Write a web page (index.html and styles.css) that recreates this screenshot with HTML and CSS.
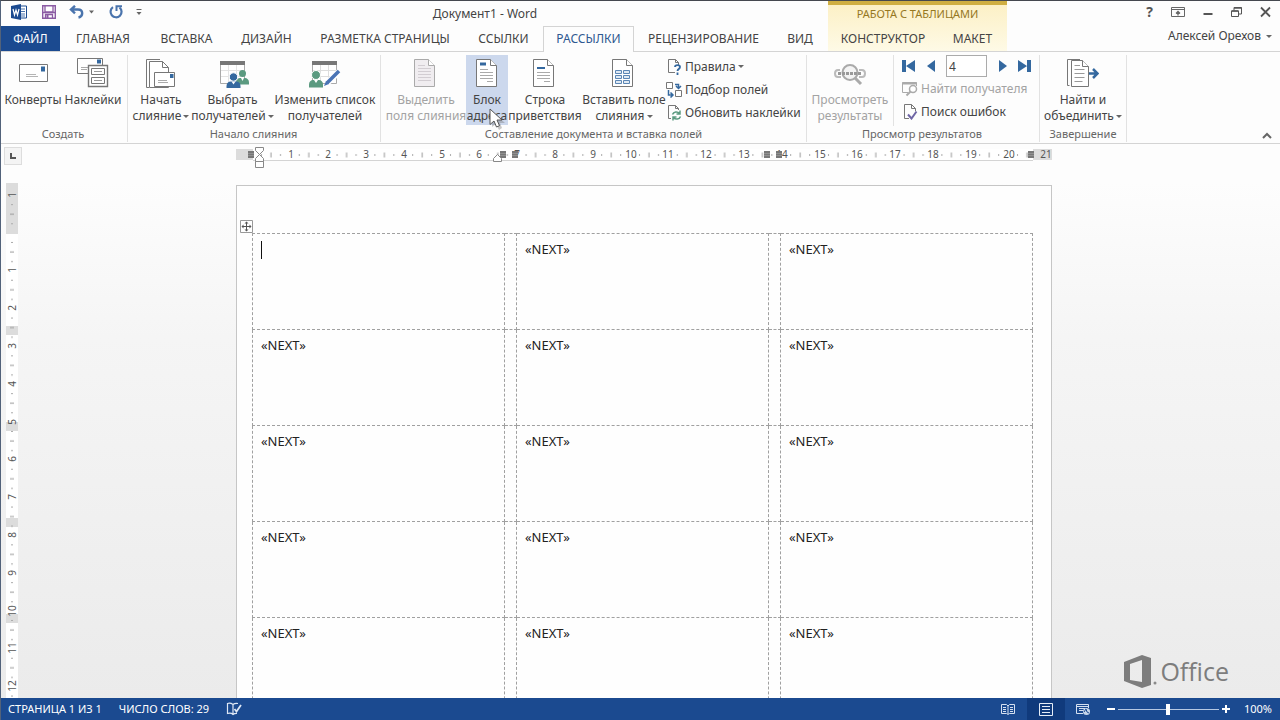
FILE: index.html
```html
<!DOCTYPE html>
<html lang="ru">
<head>
<meta charset="utf-8">
<title>Документ1 - Word</title>
<link rel="stylesheet" href="styles.css">
</head>
<body>
<div class="window">
  <header class="header">
    <div class="header-main">
      <div class="titlebar">
        <div class="quick">
          <svg class="word-logo" width="18" height="16" viewBox="0 0 18 16"><path d="M9 2h6.500v12H9z" fill="#fff" stroke="#1b4a90"/><path d="M10 5h4M10 7.500h4M10 10h4M10 12h4" stroke="#4c74ad"/><path d="M0 2 10 0v16L0 14z" fill="#1b4a90"/><path d="m2 5 1.500 6L5 6l1.500 5L8 5" fill="none" stroke="#fff" stroke-width="1.200"/></svg>
          <button class="plain" aria-label="Сохранить"><svg width="14" height="14" viewBox="0 0 14 14"><path d="M.7.7h12.600v12.600H.7z" fill="#fff" stroke="#8b5ba3" stroke-width="1.400"/><path d="M1 7.500h12M3 1v6h8V1M3.500 13V9.500h7V13" fill="none" stroke="#8b5ba3" stroke-width="1.300"/><path d="M4.500 10h2v3h-2z" fill="#8b5ba3"/></svg></button>
          <button class="plain undo" aria-label="Отменить"><svg width="27" height="14" viewBox="0 0 27 14"><path d="M2 4.500h7c5.500 0 5.500 7 .5 8M6 .8 2 4.500l4 3.800" fill="none" stroke="#4a74ad" stroke-width="2.400"/><path d="M20 5.500h5l-2.500 3z" fill="#666"/></svg></button>
          <button class="plain" aria-label="Повторить"><svg width="14" height="14" viewBox="0 0 14 14"><path d="M4 2.200A5.500 5.500 0 1 0 10.500 2.500" fill="none" stroke="#4a74ad" stroke-width="2.200"/><path d="M7.500 6V1.200H13" fill="none" stroke="#4a74ad" stroke-width="2"/></svg></button>
          <button class="plain" aria-label="Настройка панели быстрого доступа"><svg width="6" height="8" viewBox="0 0 6 8"><path d="M.5 1.500h5" stroke="#666"/><path d="M.5 4h5L3 7z" fill="#666"/></svg></button>
        </div>
        <h1 class="title">Документ1 - Word</h1>
      </div>
      <nav class="tabs">
        <button class="tab file">ФАЙЛ</button>
        <button class="tab">ГЛАВНАЯ</button>
        <button class="tab">ВСТАВКА</button>
        <button class="tab">ДИЗАЙН</button>
        <button class="tab">РАЗМЕТКА СТРАНИЦЫ</button>
        <button class="tab">ССЫЛКИ</button>
        <button class="tab active">РАССЫЛКИ</button>
        <button class="tab">РЕЦЕНЗИРОВАНИЕ</button>
        <button class="tab">ВИД</button>
      </nav>
    </div>
    <div class="context">
      <div class="context-title">РАБОТА С ТАБЛИЦАМИ</div>
      <div class="context-tabs">
        <button class="tab">КОНСТРУКТОР</button>
        <button class="tab">МАКЕТ</button>
      </div>
    </div>
    <div class="header-end">
      <div class="window-buttons">
        <button class="plain help" aria-label="Справка">?</button>
        <button class="plain" aria-label="Параметры отображения ленты"><svg width="14" height="12" viewBox="0 0 14 12"><path d="M.5 1.500h13v9H.5zM.5 3.500h13" fill="none" stroke="#666"/><path d="M7 9.500V5.500M5 7.500l2-2 2 2" fill="none" stroke="#666" stroke-width="1.300"/></svg></button>
        <button class="plain" aria-label="Свернуть"><svg width="10" height="12" viewBox="0 0 10 12"><path d="M.5 8h9" stroke="#555" stroke-width="2"/></svg></button>
        <button class="plain" aria-label="Восстановить"><svg width="11" height="12" viewBox="0 0 11 12"><path d="M.5 5h7v5.500h-7zM3 4.500V1.500h7.500V8H8" fill="none" stroke="#555"/><path d="M.5 5h7M3 2h7.500" stroke="#555" stroke-width="1.600"/></svg></button>
        <button class="plain" aria-label="Закрыть"><svg width="11" height="12" viewBox="0 0 11 12"><path d="m1 1.500 9 9m0-9-9 9" stroke="#555" stroke-width="1.800"/></svg></button>
      </div>
      <button class="plain account">Алексей Орехов <i class="arrow"></i></button>
    </div>
  </header>

  <div class="ribbon">
    <section class="group">
      <div class="tools">
        <button class="tool w60"><svg width="32" height="36" viewBox="0 0 32 36"><path d="M2.500 8.500h28v17h-28z" fill="#fff" stroke="#777"/><path d="M24 10.500h4v5h-4z" fill="#34689f"/><path d="M9 18.500h10M9 20.500h12" stroke="#b5b5b5"/></svg><span>Конверты</span></button>
        <button class="tool w60"><svg width="32" height="36" viewBox="0 0 32 36"><path d="M.5 2.500h25v15H.5z" fill="#fff" stroke="#777"/><path d="M20 3.500h4v4h-4z" fill="#34689f"/><path d="M4 11.500h7M4 13.500h6" stroke="#aaa"/><path d="M11.500 9.500h19v21h-19z" fill="#fff" stroke="#777" stroke-width="1.400"/><path d="M14.500 12.500h13v6h-13zM14.500 21.500h13v6h-13z" fill="#fff" stroke="#777"/><path d="M17 15.500h8M17 24.500h8" stroke="#999"/></svg><span>Наклейки</span></button>
      </div>
      <h2>Создать</h2>
    </section>
    <section class="group">
      <div class="tools">
        <button class="tool w60"><svg width="32" height="36" viewBox="0 0 32 36"><path d="M4 31.500H1.500v-28H15" fill="none" stroke="#777"/><path d="M4.500 5.500h13l6 6v20h-19z" fill="#fff" stroke="#777"/><path d="M17.500 5.500v6h6" fill="none" stroke="#777"/><path d="M9.500 16.500h20v14h-20z" fill="#fff" stroke="#777"/><path d="M25 18h3.500v4H25z" fill="#34689f"/><path d="M13 24.500h9M13 26.500h10" stroke="#aaa"/></svg><span>Начать<br>слияние <i class="arrow"></i></span></button>
        <button class="tool w83"><svg width="32" height="36" viewBox="0 0 32 36"><path d="M3.500 5.500h24v22h-24z" fill="#fff" stroke="#aaa"/><path d="M3 5h25v4H3z" fill="#777"/><path d="M4 14.500h23M4 20.500h23M11.500 9v18M19.500 9v18" stroke="#e4e4e4"/><circle cx="25.500" cy="17.500" r="3.500" fill="#5b9a80"/><path d="M19 28.500v-2c0-3 2-4.500 4-4.500h5c2 0 4 1.500 4 4.500v2z" fill="#5b9a80"/><path d="m24 22 1.500 3 1.500-3z" fill="#fff"/><circle cx="16.500" cy="21" r="4.200" fill="#34689f" stroke="#fff"/><path d="M9.500 32v-2c0-3 2-4.500 4-4.500h6c2 0 4 1.500 4 4.500v2z" fill="#34689f"/><path d="m14.500 25.500 2 3 2-3z" fill="#fff"/></svg><span>Выбрать<br>получателей <i class="arrow"></i></span></button>
        <button class="tool w102"><svg width="32" height="36" viewBox="0 0 32 36"><path d="M3.500 5.500h24v22h-24z" fill="#fff" stroke="#aaa"/><path d="M3 5h25v4H3z" fill="#777"/><path d="M4 14.500h23M4 20.500h23M11.500 9v18M19.500 9v18" stroke="#ddd"/><circle cx="7" cy="19" r="4.500" fill="#5b9a80" stroke="#fff"/><path d="M0 31.500v-3c0-3 2-4.500 4-4.500h6c2 0 4 1.500 4 4.500v3z" fill="#5b9a80"/><path d="m5 24 2 3 2-3z" fill="#fff"/><path d="m17 28 13-12" stroke="#fff" stroke-width="6"/><path d="m18 27 12-12" stroke="#4a74b5" stroke-width="3.500"/><path d="m15 30 2-5 3 3z" fill="#4a74b5"/></svg><span>Изменить список<br>получателей</span></button>
      </div>
      <h2>Начало слияния</h2>
    </section>
    <section class="group">
      <div class="tools">
        <button class="tool w80" disabled><svg width="32" height="36" viewBox="0 0 32 36"><path d="M4.500 3.500h14l6 6v21h-20z" fill="#f0edf0" stroke="#aaa"/><path d="M18.500 3.500v6h6" fill="#fff" stroke="#aaa"/><path d="M8 9.500h7M8 12.500h13M8 15.500h13M8 18.500h13M8 21.500h13M8 24.500h13" stroke="#d2cdd2"/></svg><span>Выделить<br>поля слияния</span></button>
        <button class="tool w42 hot"><svg width="32" height="36" viewBox="0 0 32 36"><path d="M5.500 3.500h14l6 6v21h-20z" fill="#fff" stroke="#777"/><path d="M19.500 3.500v6h6" fill="#fff" stroke="#777"/><path d="M9 8h6" stroke="#34689f" stroke-width="3"/><path d="M9 13.500h8M9 16.500h13M9 19.500h13M9 22.500h13M16 25.500h6" stroke="#aaa"/></svg><span>Блок<br>адреса</span><svg class="pointer" width="16" height="22" viewBox="0 0 16 22"><path d="M3 3v16l4-3 3 6 3-2-2-5h5z" fill="#777" opacity=".4"/><path d="M1 1v15.500l4-3.500 2.500 6 3-1.300L8 12h5z" fill="#fff" stroke="#555"/></svg></button>
        <button class="tool w74"><svg width="32" height="36" viewBox="0 0 32 36"><path d="M4.500 3.500h14l6 6v21h-20z" fill="#fff" stroke="#777"/><path d="M18.500 3.500v6h6" fill="#fff" stroke="#777"/><path d="M8 12h8" stroke="#34689f" stroke-width="2"/><path d="M8 16.500h13M8 19.500h13M8 22.500h13M15 25.500h6" stroke="#aaa"/></svg><span>Строка<br>приветствия</span></button>
        <button class="tool w84"><svg width="32" height="36" viewBox="0 0 32 36"><path d="M4.500 3.500h14l6 6v21h-20z" fill="#fff" stroke="#777"/><path d="M18.500 3.500v6h6" fill="#fff" stroke="#777"/><path d="M7.500 14.500h6v3h-6zM15.500 14.500h6v3h-6zM7.500 19.500h6v3h-6zM15.500 19.500h6v3h-6zM7.500 24.500h6v3h-6zM15.500 24.500h6v3h-6z" fill="#dfe9f3" stroke="#5b86b5"/></svg><span>Вставить поле<br>слияния <i class="arrow"></i></span></button>
        <div class="stack">
          <button class="small"><svg width="16" height="16" viewBox="0 0 16 16"><path d="M9 13.500H2.500v-13h7l3 3V6M9.500.5v3h3" fill="none" stroke="#777"/><path d="M9 8c0-2.500 5-2.500 5 0 0 2-2.500 2-2.500 4M11.500 13.500V16" fill="none" stroke="#34689f" stroke-width="1.800"/></svg>Правила<i class="arrow"></i></button>
          <button class="small"><svg width="16" height="16" viewBox="0 0 16 16"><path d="M.5.500h6v6h-6zM9.500 8.500h6v6h-6z" fill="#fff" stroke="#777"/><path d="M2.500 8v5H6M4.500 10.500 7 13l-2.500 2.500M9 2.500h3.500V6M10 4l2.500 2.500L15 4" fill="none" stroke="#34689f" stroke-width="1.500"/></svg>Подбор полей</button>
          <button class="small"><svg width="16" height="16" viewBox="0 0 16 16"><path d="M5 13.500H2.500v-13h7l3 3V5M9.500.5v3h3" fill="none" stroke="#777"/><path d="M6.500 9.500c1-3 5-3.500 7-1M14 5.500V9h-3.500M14.500 11.500c-1 3-5 3.500-7 1M7 15.500V12h3.500" fill="none" stroke="#5b9a80" stroke-width="1.500"/></svg>Обновить наклейки</button>
        </div>
      </div>
      <h2>Составление документа и вставка полей</h2>
    </section>
    <section class="group">
      <div class="tools">
        <button class="tool w80" disabled><svg width="32" height="36" viewBox="0 0 32 36"><path d="M6 14H4c-4 0-4 7 0 7h3M25 14h3c4 0 4 7 0 7h-3" fill="none" stroke="#bbb" stroke-width="2"/><circle cx="16" cy="16.500" r="7.500" fill="#f4f4f4" stroke="#aaa" stroke-width="2"/><path d="M4 17.500h24" stroke="#999" stroke-width="3" stroke-dasharray="3 1"/><path d="m21 22 6 6" stroke="#aaa" stroke-width="3"/></svg><span>Просмотреть<br>результаты</span></button>
        <div class="preview">
          <div class="records">
            <button class="plain" aria-label="Первая запись"><svg width="13" height="12" viewBox="0 0 13 12"><path d="M0 0h4v12H0zM13 0v12L4 6z" fill="#34689f"/></svg></button>
            <button class="plain" aria-label="Предыдущая запись"><svg width="8" height="12" viewBox="0 0 8 12"><path d="M8 0v12L0 6z" fill="#34689f"/></svg></button>
            <input class="record" type="text" value="4" aria-label="Запись">
            <button class="plain" aria-label="Следующая запись"><svg width="8" height="12" viewBox="0 0 8 12"><path d="M0 0v12l8-6z" fill="#34689f"/></svg></button>
            <button class="plain" aria-label="Последняя запись"><svg width="13" height="12" viewBox="0 0 13 12"><path d="M9 0h4v12H9zM0 0v12l9-6z" fill="#34689f"/></svg></button>
          </div>
          <button class="small" disabled><svg width="16" height="16" viewBox="0 0 16 16"><path d="M6 11.500H.5v-10h14V5" fill="none" stroke="#aaa"/><path d="M0 2.500h15" stroke="#aaa" stroke-width="2"/><circle cx="11" cy="8" r="3.500" fill="#fff" stroke="#aaa" stroke-width="1.500"/><path d="m8.500 10.500-4 4" stroke="#aaa" stroke-width="2"/></svg>Найти получателя</button>
          <button class="small"><svg width="16" height="16" viewBox="0 0 16 16"><path d="M7 14.500H2.500V.5h7l4 4V7M9.500.5v4h4" fill="none" stroke="#777"/><path d="m6 10.500 3.500 4 5-7" fill="none" stroke="#6f66a5" stroke-width="2"/></svg>Поиск ошибок</button>
        </div>
      </div>
      <h2>Просмотр результатов</h2>
    </section>
    <section class="group">
      <div class="tools">
        <button class="tool w80"><svg width="32" height="36" viewBox="0 0 32 36"><path d="M2.500 29.500h-2v-26H13" fill="none" stroke="#777"/><path d="M4.500 4.500h11l6 6v20h-17z" fill="#fff" stroke="#777"/><path d="M15.500 4.500v6h6" fill="#fff" stroke="#777"/><path d="M7.500 9.500H13M7.500 13.500h10M7.500 17.500h10M7.500 21.500h10M7.500 25.500h8" stroke="#999"/><path d="M22 17.500h8M26 13l4.500 4.500L26 22" fill="none" stroke="#34689f" stroke-width="2.500"/></svg><span>Найти и<br>объединить <i class="arrow"></i></span></button>
      </div>
      <h2>Завершение</h2>
    </section>
    <button class="plain collapse" aria-label="Свернуть ленту"><svg width="10" height="8" viewBox="0 0 10 8"><path d="m1 6 4-4 4 4" fill="none" stroke="#666" stroke-width="2"/></svg></button>
  </div>

  <div class="ruler-row">
    <button class="tab-stop" aria-label="Позиция табуляции"><svg width="8" height="8" viewBox="0 0 8 8"><path d="M2 1v5h5" fill="none" stroke="#555" stroke-width="2"/></svg></button>
    <div class="ruler-track">
      <svg class="ruler" width="816" height="20" viewBox="0 0 816 20">
        <defs><pattern id="cm" x="16" y="0" width="37.800" height="12" patternUnits="userSpaceOnUse"><path d="M9.500 5v2M28.500 5v2" stroke="#aaa"/><path d="M19 3.500v5" stroke="#999"/></pattern></defs>
        <path d="M0 0h17v11H0zM797 0h19v11h-19z" fill="#dcdcdc"/>
        <path d="M17 0h780v11H17z" fill="#fff"/><path d="M17 11.500h780" stroke="#d4d4d4"/>
        <path d="M17 0h780v11H17z" fill="url(#cm)"/>
        <g class="marks"><text x="55" y="9">1</text><text x="92" y="9">2</text><text x="130" y="9">3</text><text x="168" y="9">4</text><text x="206" y="9">5</text><text x="243" y="9">6</text><text x="281" y="9">7</text><text x="319" y="9">8</text><text x="357" y="9">9</text><text x="395" y="9">10</text><text x="432" y="9">11</text><text x="470" y="9">12</text><text x="508" y="9">13</text><text x="546" y="9">14</text><text x="584" y="9">15</text><text x="621" y="9">16</text><text x="659" y="9">17</text><text x="697" y="9">18</text><text x="735" y="9">19</text><text x="773" y="9">20</text><text x="810" y="9">21</text></g>
        <path d="M12 2h6v7h-6zM264 2h6v7h-6zM276 2h6v7h-6zM528 2h6v7h-6zM540 2h6v7h-6zM792 2h6v7h-6z" fill="#777"/>
        <path d="M12 4.500h6M12 6.500h6M264 4.500h6M264 6.500h6M276 4.500h6M276 6.500h6M528 4.500h6M528 6.500h6M540 4.500h6M540 6.500h6M792 4.500h6M792 6.500h6" stroke="#aaa" stroke-width=".5"/>
      </svg>
      <svg class="indents" width="248" height="24" viewBox="0 0 248 24"><path d="M.5.500h8v3l-4 4-4-4zM.5 14.500v-3l4-4 4 4v3zM.5 14.500h8v6h-8z" fill="#fff" stroke="#888"/><path d="M238.500 14.500v-3l4-4 4 4v3z" fill="#fff" stroke="#888"/></svg>
    </div>
  </div>

  <main class="workspace">
    <svg class="vruler" width="12" height="516" viewBox="0 0 12 516">
      <defs><pattern id="vcm" x="0" y="50" width="12" height="37.800" patternUnits="userSpaceOnUse"><path d="M5 9.500h2M5 28.500h2" stroke="#aaa"/><path d="M4 19h4" stroke="#999"/></pattern></defs>
      <path d="M0 0h12v516H0z" fill="#fff"/>
      <path d="M0 0h12v51H0zM0 143h12v9H0zM0 239h12v9H0zM0 335h12v9H0zM0 431h12v9H0z" fill="#dcdcdc"/>
      <path d="M0 18h12v498H0z" fill="url(#vcm)"/>
      <g class="marks"><text transform="translate(10 12) rotate(-90)">1</text><text transform="translate(10 87) rotate(-90)">1</text><text transform="translate(10 125) rotate(-90)">2</text><text transform="translate(10 163) rotate(-90)">3</text><text transform="translate(10 201) rotate(-90)">4</text><text transform="translate(10 239) rotate(-90)">5</text><text transform="translate(10 276) rotate(-90)">6</text><text transform="translate(10 314) rotate(-90)">7</text><text transform="translate(10 352) rotate(-90)">8</text><text transform="translate(10 390) rotate(-90)">9</text><text transform="translate(10 428) rotate(-90)">10</text><text transform="translate(10 465) rotate(-90)">11</text><text transform="translate(10 503) rotate(-90)">12</text></g>
    </svg>
    <div class="canvas">
      <article class="page">
        <svg class="handle" width="13" height="13" viewBox="0 0 13 13"><path d="M.5.500h12v12H.5z" fill="#fff" stroke="#999"/><path d="M6.500 2v9M2 6.500h9" stroke="#555"/><path d="m6.500 1.500 2 2h-4zM6.500 11.500l2-2h-4zM1.500 6.500l2-2v4zM11.500 6.500l-2-2v4z" fill="#555"/></svg>
        <table class="labels">
          <colgroup><col class="label"><col class="gutter"><col class="label"><col class="gutter"><col class="label"></colgroup>
          <tr><td><span class="caret"></span></td><td></td><td>«NEXT»</td><td></td><td>«NEXT»</td></tr>
          <tr><td>«NEXT»</td><td></td><td>«NEXT»</td><td></td><td>«NEXT»</td></tr>
          <tr><td>«NEXT»</td><td></td><td>«NEXT»</td><td></td><td>«NEXT»</td></tr>
          <tr><td>«NEXT»</td><td></td><td>«NEXT»</td><td></td><td>«NEXT»</td></tr>
          <tr><td>«NEXT»</td><td></td><td>«NEXT»</td><td></td><td>«NEXT»</td></tr>
        </table>
      </article>
    </div>
    <div class="watermark"><svg width="33" height="33" viewBox="0 0 33 33"><path d="M0 7 18 0l9 3v27l-9 3L0 26l6-1 12 2V5L6 9v16l-6 1z" fill="#7d7d7d"/><circle cx="31" cy="28" r="1.500" fill="#8a8a8a"/></svg><span>Office</span></div>
  </main>

  <footer class="status">
    <span>СТРАНИЦА 1 ИЗ 1</span>
    <span>ЧИСЛО СЛОВ: 29</span>
    <button class="plain" aria-label="Правописание"><svg width="16" height="14" viewBox="0 0 16 14"><path d="M7 2.500C5 1 3 1 1.500 1.500v10c2-.5 4-.5 5.500 1 1-1 2-1.300 4-1.200M7 2.500v10M7 2.500c1.500-1.200 3-1.300 5-1" fill="none" stroke="#dfe8f5" stroke-width="1.200"/><path d="m8.500 7 2 2.500L15 3" fill="none" stroke="#dfe8f5" stroke-width="1.800"/></svg></button>
    <div class="views">
      <button class="plain view" aria-label="Режим чтения"><svg width="14" height="12" viewBox="0 0 14 12"><path d="M.5 1.500h5L7 3l1.500-1.500h5v9h-5L7 11.500l-1.500-1h-5zM7 3v8M2 4.500h3M2 6.500h3M2 8.500h3M9 4.500h3M9 6.500h3M9 8.500h3" fill="none" stroke="#d5e0f0"/></svg></button>
      <button class="plain view on" aria-label="Разметка страницы"><svg width="14" height="13" viewBox="0 0 14 13"><path d="M.5.500h13v12H.5zM3 3.500h8M3 6.500h8M3 9.500h8" fill="none" stroke="#e6edf7"/></svg></button>
      <button class="plain view" aria-label="Веб-документ"><svg width="15" height="13" viewBox="0 0 15 13"><path d="M7 10.500H.5v-9h12V5M.5 3.500h12M3 5.500h6M3 7.500h4" fill="none" stroke="#d5e0f0"/><circle cx="10.500" cy="8.500" r="3.500" fill="#c5d5ea"/><path d="m8 9 2-3 1 3 2 1" fill="none" stroke="#1b4a90"/></svg></button>
    </div>
    <div class="zoom">
      <button class="plain" aria-label="Уменьшить"><svg width="8" height="8" viewBox="0 0 8 8"><path d="M0 4h8" stroke="#fff" stroke-width="2"/></svg></button>
      <input type="range" min="0" max="100" value="50" aria-label="Масштаб">
      <button class="plain" aria-label="Увеличить"><svg width="8" height="8" viewBox="0 0 8 8"><path d="M0 4h8M4 0v8" stroke="#fff" stroke-width="2"/></svg></button>
    </div>
    <span class="percent">100%</span>
  </footer>
</div>
</body>
</html>
```
FILE: styles.css
```css
* { box-sizing: border-box; }

body {
  margin: 0;
  background: #fdfdfd;
  color: #444;
  font: 12px/16px "Noto Sans", "Open Sans", sans-serif;
}

button, input { font: inherit; color: inherit; }
button { margin: 0; padding: 0; border: 0; background: none; }
button:disabled { color: #a3a3a3; }
svg { display: block; flex: none; }
h1, h2 { margin: 0; font-size: 12px; font-weight: 400; }

.plain { display: flex; align-items: center; justify-content: center; }

.window {
  display: flex;
  flex-direction: column;
  height: 100vh;
  overflow: hidden;
  border-top: 1px solid #45484f;
  border-left: 1px solid #52627a;
}

/* Title bar and tabs */
.header { display: flex; height: 51px; border-bottom: 1px solid #d4d4d4; }
.header-main { width: 827px; flex: none; }
.titlebar { display: flex; height: 25px; align-items: center; }
.quick { display: flex; align-items: center; width: 141px; padding: 0 0 3px 10px; gap: 13px; }
.title { flex: 1; text-align: center; }

.tabs {
  display: grid;
  grid-template-columns: 59px 86px 81px 79px 158px 79px 91px 139px 54px;
  height: 26px;
}
.tab { height: 25px; white-space: nowrap; }
.tab.file { background: #1b4a90; color: #fff; }
.tab.active {
  height: 26px;
  padding-bottom: 2px;
  border: 1px solid #d4d4d4;
  border-bottom: 0;
  background: #fdfdfd;
  color: #2f5890;
}

.context {
  display: flex;
  flex-direction: column;
  width: 179px;
  flex: none;
  border-top: 4px solid #cfae42;
  background: linear-gradient(#fcf0c6, #fefae6);
}
.context-title { height: 21px; line-height: 18px; font-size: 11px; text-align: center; color: #96781f; }
.context-tabs { display: grid; grid-template-columns: 110px 69px; }

.header-end { display: flex; flex: 1; flex-direction: column; }
.window-buttons { display: flex; justify-content: flex-end; gap: 18px; padding: 3px 9px 0 0; }
.help { font-size: 14px; font-weight: 700; color: #555; }
.account { align-self: flex-end; gap: 5px; margin: 8px 8px 0 0; }

.arrow {
  display: inline-block;
  flex: none;
  border: 3px solid transparent;
  border-top-color: #666;
  border-bottom: 0;
  vertical-align: middle;
}

/* Ribbon */
.ribbon { display: flex; height: 92px; border-bottom: 1px solid #d4d4d4; }
.group {
  display: flex;
  flex-direction: column;
  align-items: center;
  height: 87px;
  margin-top: 3px;
  padding: 0 5px;
  border-right: 1px solid #e2e2e2;
}
.group:first-child { padding: 0 4px 0 2px; }
.group:nth-child(2) { padding: 0 4px 0 3px; }
.group:nth-child(4) { padding: 0 5px 0 3px; }
.group:nth-child(5) { padding: 0 3px; }
.group h2 { line-height: 16px; font-size: 11px; color: #666; white-space: nowrap; }
.tools { display: flex; height: 72px; }
.tool {
  position: relative;
  display: flex;
  flex-direction: column;
  align-items: center;
  flex: none;
  height: 70px;
  padding-top: 1px;
  white-space: nowrap;
}
.tool .arrow { margin-left: -1px; }
.w42 { width: 42px; }
.w60 { width: 60px; }
.w74 { width: 74px; }
.w80 { width: 80px; }
.w83 { width: 83px; }
.w84 { width: 84px; }
.w102 { width: 102px; }
.hot { background: #ccd8ed; }
.pointer { position: absolute; top: 53px; left: 23px; }

.stack { display: flex; flex-direction: column; width: 135px; }
.small { display: flex; align-items: center; gap: 3px; height: 23px; white-space: nowrap; }
.small .arrow { margin-left: -1px; }

.preview { margin-left: 3px; padding-left: 8px; width: 141px; border-left: 1px solid #e2e2e2; }
.records { display: flex; align-items: center; justify-content: space-between; width: 129px; height: 22px; }
.record { width: 41px; height: 22px; padding: 0 2px; border: 1px solid #ababab; background: #fff; }
.collapse { align-self: flex-end; margin: 0 8px 3px auto; }

/* Horizontal ruler */
.ruler-row { display: flex; height: 39px; flex: none; }
.tab-stop {
  display: flex;
  align-items: center;
  justify-content: center;
  width: 18px;
  height: 18px;
  margin: 3px 0 0 3px;
  border: 1px solid #ddd;
  background: #f4f4f4;
}
.ruler-track {
  position: relative;
  display: flex;
  flex: 1;
  justify-content: center;
  padding: 5px 14px 0 0;
}
.ruler { overflow: visible; }
.indents { position: absolute; top: 3px; left: calc(50% - 396px); }
.marks { fill: #555; font-size: 10px; text-anchor: middle; }

/* Document area */
.workspace {
  position: relative;
  display: flex;
  flex: 1;
  min-height: 0;
  padding-left: 5px;
  overflow: hidden;
  background: linear-gradient(#fdfdfd, #f5f5f5 30%, #ebebeb);
}
.canvas { display: flex; flex: 1; justify-content: center; padding: 2px 10px 0 0; }
.page {
  position: relative;
  width: 816px;
  height: 1056px;
  flex: none;
  padding: 47px 15px;
  border: 1px solid #c6c6c6;
  background: #fefefe;
}
.handle { position: absolute; top: 34px; left: 3px; }
.labels { width: 781px; border-collapse: collapse; table-layout: fixed; color: #222; font-size: 13px; }
.labels td { height: 96px; padding: 7px 8px; border: 1px dashed #a0a0a0; vertical-align: top; }
.labels td:nth-child(even) { padding: 0; }
.label { width: 252px; }
.gutter { width: 12px; }
.caret { display: block; width: 1px; height: 18px; background: #111; }

.watermark {
  position: absolute;
  right: 51px;
  bottom: 10px;
  display: flex;
  align-items: center;
  gap: 3px;
  color: #7d7d7d;
  font: 400 25px/34px "Open Sans", "Noto Sans", sans-serif;
}

/* Status bar */
.status {
  display: flex;
  align-items: center;
  height: 22px;
  flex: none;
  gap: 17px;
  padding: 0 8px 0 7px;
  background: #1b4a90;
  color: #fff;
  font-size: 11px;
}
.views { display: flex; height: 22px; margin-left: auto; }
.view { width: 38px; }
.view.on { background: #103a7c; }
.zoom { display: flex; align-items: center; gap: 3px; margin-left: -13px; }
.zoom input { width: 101px; height: 12px; margin: 0; appearance: none; background: none; }
.zoom input::-webkit-slider-runnable-track { height: 1px; background: #b6c8e2; }
.zoom input::-webkit-slider-thumb { width: 4px; height: 11px; margin-top: -5px; appearance: none; background: #fff; }
.percent { margin-left: -3px; }
```
